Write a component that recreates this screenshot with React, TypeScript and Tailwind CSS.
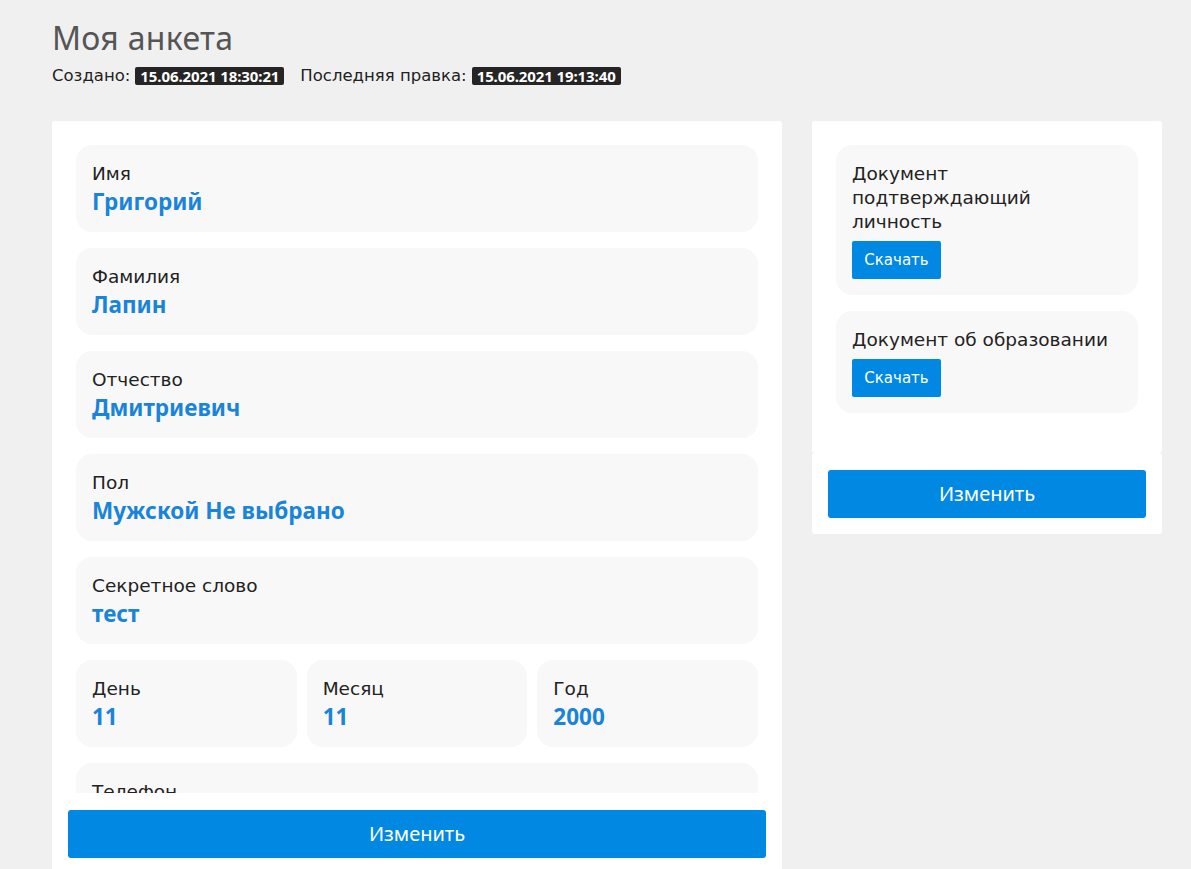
import React from 'react'

const font = { fontFamily: '"Noto Sans", "Open Sans", sans-serif' }
const wide = '[font-family:"DejaVu_Sans",sans-serif]'

function Field({ label, value }: { label: string; value: string }) {
  return (
    <div className="rounded-2xl bg-[#f8f8f8] px-4 pt-[17px] pb-[15px]">
      <div className={`${wide} text-[18.5px] leading-[24px] text-[#222]`}>{label}</div>
      <div className="text-[22.5px] leading-[31px] font-bold text-[#1a84d8]">{value}</div>
    </div>
  )
}

function Badge({ children }: { children: React.ReactNode }) {
  return (
    <span
      className="inline-block bg-[#252525] text-white text-[15px] font-bold leading-[18px] px-[5px] rounded-[2px] tracking-[-0.1px]"
      style={font}
    >
      {children}
    </span>
  )
}

function DocCard({ title, narrow }: { title: string; narrow?: boolean }) {
  return (
    <div className="rounded-2xl bg-[#f8f8f8] px-4 pt-[17px] pb-4">
      <div className={`${wide} text-[18.5px] leading-[24px] text-[#222] ${narrow ? 'w-[200px]' : ''}`}>{title}</div>
      <button className={`${wide} mt-[7px] h-[38px] w-[89px] bg-[#0088e3] text-white text-[15px] rounded-[2px]`}>
        Скачать
      </button>
    </div>
  )
}

export default function App() {
  return (
    <div className="min-h-screen bg-[#f0f0f0] pl-[52px] pt-[18px] overflow-hidden h-[869px]" style={font}>
      <h1 className="text-[32px] leading-[40px] text-[#555] tracking-[0.3px]">Моя анкета</h1>
      <div className={`${wide} mt-[8px] flex items-center text-[16.5px] text-[#222] leading-[20px]`}>
        <span className="mr-[5px]">Создано:</span>
        <Badge>15.06.2021 18:30:21</Badge>
        <span className="ml-[16px] mr-[5px]">Последняя правка:</span>
        <Badge>15.06.2021 19:13:40</Badge>
      </div>

      <div className="mt-[35px] flex items-start gap-[30px]">
        <div className="w-[730px] bg-white rounded-[3px] shrink-0">
          <div className="h-[672px] overflow-hidden px-6 pt-6 flex flex-col gap-4">
            <Field label="Имя" value="Григорий" />
            <Field label="Фамилия" value="Лапин" />
            <Field label="Отчество" value="Дмитриевич" />
            <Field label="Пол" value="Мужской Не выбрано" />
            <Field label="Секретное слово" value="тест" />
            <div className="grid grid-cols-3 gap-[10px]">
              <Field label="День" value="11" />
              <Field label="Месяц" value="11" />
              <Field label="Год" value="2000" />
            </div>
            <Field label="Телефон" value="+7 900 000-00-00" />
          </div>
          <div className="px-4 pt-[17px] pb-4">
            <button className="w-full h-[48px] bg-[#0088e3] text-white text-[20px] rounded-[3px]">
              Изменить
            </button>
          </div>
        </div>

        <div className="w-[350px] flex flex-col">
          <div className="bg-white rounded-[3px] px-6 pt-6 pb-[40px] flex flex-col gap-4">
            <DocCard title="Документ подтверждающий личность" narrow />
            <DocCard title="Документ об образовании" />
          </div>
          <div className="bg-white rounded-[3px] px-4 pt-[17px] pb-4">
            <button className="w-full h-[48px] bg-[#0088e3] text-white text-[20px] rounded-[3px]">
              Изменить
            </button>
          </div>
        </div>
      </div>
    </div>
  )
}
